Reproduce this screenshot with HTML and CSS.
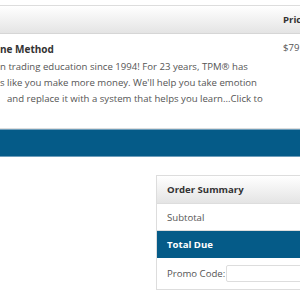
FILE: index.html
```html
<!DOCTYPE html>
<html lang="en">
<head>
	<meta charset="UTF-8">
	<title>Cart</title>
	<link rel="stylesheet" href="styles.css">
</head>
<body>
	<div class="cart">
		<div class="cart-head">
			<div class="col-product"></div>
			<div class="col-price">Price</div>
		</div>
		<div class="cart-row">
			<div class="col-product">
				<h3 class="item-title">ne Method</h3>
				<p class="item-desc">n trading education since 1994! For 23 years, TPM® has<br>s like you make more money. We'll help you take emotion<br><span class="indent">and replace it with a system that helps you learn...Click to</span></p>
			</div>
			<div class="col-price">$79</div>
		</div>
	</div>
	<div class="checkout-bar"></div>

	<div class="summary">
		<div class="summary-head">Order Summary</div>
		<div class="summary-row">Subtotal</div>
		<div class="summary-row total">Total Due</div>
		<div class="summary-row promo">
			<label for="promo">Promo Code:</label>
			<input type="text" id="promo">
		</div>
	</div>
</body>
</html>
```

FILE: styles.css
```css
*{
	margin:0;
	padding:0;
	box-sizing:border-box;
}
html,body{
	width:100%;
	height:100%;
}
body{
	background:#fff;
	overflow:hidden;
	font-family:"Open Sans","DejaVu Sans",sans-serif;
	font-size:9.6px;
	color:#555;
}
.cart{
	margin-top:5px;
	width:360px;
	border-top:1px solid #ddd;
}
.cart-head{
	display:flex;
	align-items:center;
	height:28px;
	background:linear-gradient(#fff,#e4e4e4);
	border-bottom:1px solid #d6d6d6;
	font-weight:bold;
	color:#333;
}
.col-product{
	width:283px;
	flex:none;
}
.col-price{
	flex:1;
}
.cart-row{
	display:flex;
	height:95px;
	border-bottom:1px solid #ddd;
}
.cart-row .col-price{
	padding-top:7px;
}
.item-title{
	font-size:10px;
	font-weight:bold;
	color:#333;
	margin-top:8px;
	line-height:14px;
}
.item-desc{
	margin-top:3px;
	line-height:16px;
	white-space:nowrap;
}
.indent{
	padding-left:7px;
}
.checkout-bar{
	height:28px;
	background:#055b88;
	border-top:1px solid #6d9dba;
	border-bottom:1px solid #6d9dba;
}
.summary{
	margin:18px 0 0 156px;
	width:200px;
	border:1px solid #ddd;
}
.summary-head{
	height:28px;
	line-height:27px;
	padding-left:10px;
	background:linear-gradient(#fff,#e4e4e4);
	border-bottom:1px solid #ddd;
	font-weight:bold;
	color:#333;
}
.summary-row{
	height:27px;
	line-height:27px;
	padding-left:10px;
	border-bottom:1px solid #ddd;
}
.summary-row.total{
	background:#055b88;
	color:#fff;
	font-weight:bold;
	border-bottom:none;
}
.summary-row.promo{
	display:flex;
	align-items:center;
	height:31px;
	border-bottom:none;
}
.promo label{
	line-height:14px;
}
.promo input{
	width:100px;
	height:17px;
	margin-left:1px;
	border:1px solid #ddd;
	border-radius:2px;
	font-family:inherit;
}
```
